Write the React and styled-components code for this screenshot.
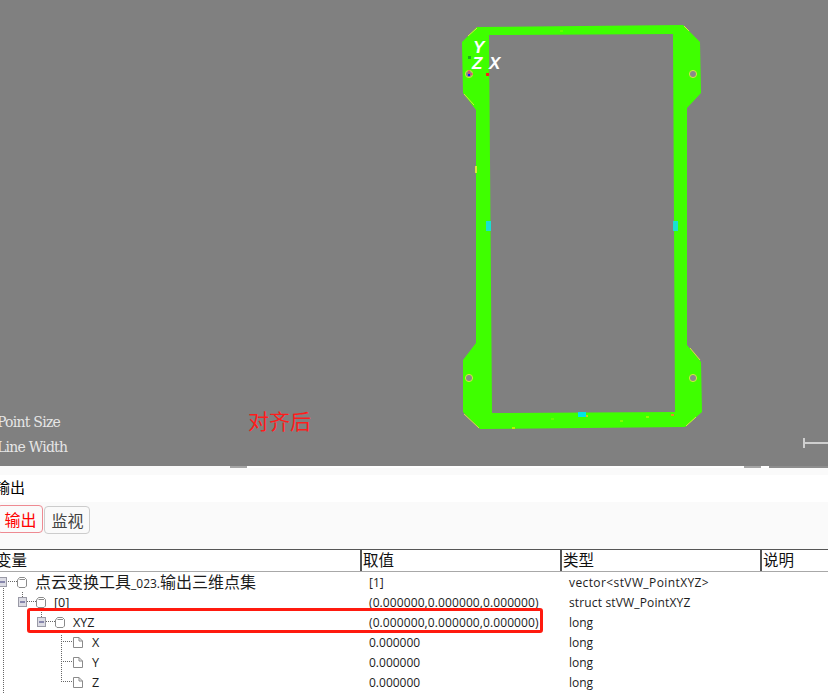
import React from "react"
import styled, { createGlobalStyle } from "styled-components"

const GlobalStyle = createGlobalStyle`
    html, body {
        margin: 0;
        padding: 0;
        background: #ffffff;
        overflow: hidden;
    }
`

const cjk = `"Noto Sans CJK SC", sans-serif`
const ui = `"Open Sans", "Noto Sans CJK SC", sans-serif`

const Page = styled.div`
    width: 828px;
    height: 694px;
    display: flex;
    flex-direction: column;
    overflow: hidden;
    position: relative;
    font-family: ${ui};
`

const Viewport = styled.section`
    position: relative;
    height: 466px;
    flex: none;
    background: #808080;
    overflow: hidden;
`

const Plate = styled.svg`
    position: absolute;
    inset: 0;
`

const AxisLabel = styled.span`
    position: absolute;
    left: ${props => props.x}px;
    top: ${props => props.y}px;
    color: #ffffff;
    font: italic bold 17px/16px "Liberation Sans", sans-serif;
`

const ControlLabel = styled.span`
    position: absolute;
    left: -3px;
    top: ${props => props.y}px;
    color: #e6e6e6;
    font: 14px/20px "DejaVu Serif", serif;
    letter-spacing: -0.75px;
`

const Caption = styled.span`
    position: absolute;
    left: 248px;
    top: 406px;
    color: #ff1c1c;
    font: 21px/28px ${cjk};
`

const ScaleBar = styled.div`
    position: absolute;
    left: 803px;
    top: 438px;
    width: 25px;
    height: 10px;
    box-sizing: border-box;
    border-left: 2px solid #cfcfcf;

    &::after {
        content: "";
        display: block;
        margin-top: 4px;
        height: 2px;
        background: #cfcfcf;
    }
`

const Slider = styled.div`
    height: 2px;
    flex: none;
    display: flex;
    background: #fafafa;
`

const SliderPart = styled.div`
    width: ${props => props.w}px;
    flex: ${props => props.w ? "none" : 1};
    background: ${props => props.color};
`

const GapStrip = styled.div`
    height: 7px;
    flex: none;
    background: #fafafa;
`

const PanelTitle = styled.div`
    height: 27px;
    flex: none;
    margin-left: -5px;
    background: #ffffff;
    color: #000000;
    font: 15px/24px ${cjk};
`

const TabBar = styled.div`
    height: 47px;
    flex: none;
    box-sizing: border-box;
    background: #fafafa;
    display: flex;
    align-items: flex-start;
    gap: 1px;
    padding-top: 3px;
    margin-left: -3px;
`

const Tab = styled.button`
    width: 46px;
    height: 28px;
    margin-top: ${props => props.active ? "0" : "1px"};
    padding: 0 0 0 1px;
    box-sizing: border-box;
    border-radius: 4px;
    border: 1px solid ${props => props.active ? "#ee8a92" : "#cccccc"};
    background: #fafafa;
    color: ${props => props.active ? "#ff0000" : "#444444"};
    font: 16px/24px ${cjk};
`

const Table = styled.div`
    flex: 1;
    background: #ffffff;
    border-top: 1px solid #555555;
`

const HeaderRow = styled.div`
    height: 21px;
    display: grid;
    grid-template-columns: 360px 200px 200px 68px;
    border-bottom: 1px solid #a8a8a8;
`

const HeaderCell = styled.div`
    box-sizing: border-box;
    padding-left: ${props => props.first ? "0" : "1px"};
    margin-left: ${props => props.first ? "-4px" : "0"};
    border-left: ${props => props.first ? "none" : "2px solid #555555"};
    color: #111111;
    font: 15.5px/18px ${cjk};
`

const Row = styled.div`
    height: 20px;
    display: grid;
    grid-template-columns: 360px 200px 268px;
    color: #1c1c1c;
    font-size: 12px;
    line-height: 22px;
`

const NameCell = styled.div`
    height: 20px;
    display: flex;
    align-items: center;
    margin-left: ${props => props.indent}px;
    white-space: nowrap;
`

const Connector = styled.span`
    flex: none;
    width: ${props => props.w}px;
`

const TreeName = styled.span`
    margin-left: ${props => props.leaf ? 9 : 8}px;
    padding-top: ${props => props.large ? 0 : 2}px;
    font-size: ${props => props.large ? "16px" : "12.6px"};
    font-family: ${props => props.large ? cjk : ui};

    small {
        font-size: 12px;
        font-family: ${ui};
    }
`

const ValueCell = styled.div`
    padding-left: 9px;
    white-space: nowrap;
    letter-spacing: ${props => props.spread || 0}px;
`

const TypeCell = styled.div`
    padding-left: 9px;
    white-space: nowrap;
    letter-spacing: ${props => props.spread || 0}px;
`

const TreeGuides = styled.svg`
    position: absolute;
    left: 0;
    top: 572px;
    pointer-events: none;
`

const Highlight = styled.div`
    position: absolute;
    left: 27px;
    top: 608px;
    width: 516px;
    height: 25px;
    box-sizing: border-box;
    border: 3px solid #ff1a0f;
    border-radius: 3px;
    pointer-events: none;
`

const ExpanderBox = styled.svg`
    flex: none;
`

const NodeGlyph = styled.svg`
    flex: none;
`

const outline = "M477 27L683 25L700 42L701 93L687 108L687 345L701 362L702 412L685 427L480 429L463 412L463 360L476 343L476 110L463 93L462 42Z"
const opening = "M489 35L673 34L675 412L492 413Z"

const holes = [[469, 74], [693, 74], [469, 378], [693, 378]]
const edgeMarks = [
    "M468 36L477 28", "M684 26L689 31", "M464 94L474 105",
    "M690 348L700 360", "M464 414L479 428", "M686 426L696 417",
]
const specks = [
    [512, 427, "#b9f000"], [671, 414, "#e88a2a"], [646, 416, "#8cff00"], [620, 420, "#7cff00"],
    [585, 415, "#d8c020"], [551, 418, "#62ff00"], [560, 30, "#62ff00"],
]

const Expander = () => (
    <ExpanderBox width="9" height="10" viewBox="0 0 9 10">
        <rect x="0.5" y="0.5" width="8" height="9" fill="#dcdce4" stroke="#9a9aa6" />
        <path d="M2 5H7" stroke="#333377" />
    </ExpanderBox>
)

// folder for branches, sheet with a folded corner for leaves
const NodeIcon = ({ leaf }) => (
    <NodeGlyph width="10" height="11" viewBox="0 0 10 11" fill="none" stroke="#8a8a8a">
        {leaf
            ? <path d="M0.5 0.5H6L9.5 4V10.5H0.5ZM6 0.5V4H9.5" />
            : <path d="M0.5 3L2.5 0.5H7.5L9.5 2.5V9L8 10.5H2L0.5 9ZM2.5 2.5H8" />}
    </NodeGlyph>
)

const rows = [
    { indent: -2, connector: 10, name: <>点云变换工具<small>_023.</small>输出三维点集</>, large: true, value: "[1]", type: "vector<stVW_PointXYZ>", typeSpread: 0.4 },
    { indent: 18, connector: 9, name: "[0]", value: "(0.000000,0.000000,0.000000)", valueSpread: 0.1, type: "struct stVW_PointXYZ", typeSpread: 0.15 },
    { indent: 37, connector: 9, name: "XYZ", value: "(0.000000,0.000000,0.000000)", valueSpread: 0.1, type: "long" },
    { indent: 73, name: "X", leaf: true, value: "0.000000", type: "long" },
    { indent: 73, name: "Y", leaf: true, value: "0.000000", type: "long" },
    { indent: 73, name: "Z", leaf: true, value: "0.000000", type: "long" },
]

export default function App() {
    return (
        <Page>
            <GlobalStyle />
            <Viewport>
                <Plate width="828" height="466" viewBox="0 0 828 466">
                    <path d={outline + opening} fill="#3fff00" fillRule="evenodd" />
                    {edgeMarks.map(d => <path key={d} d={d} stroke="#d6e83c" strokeWidth="1" />)}
                    {specks.map(([x, y, color]) => <rect key={x} x={x} y={y} width="3" height="2" fill={color} />)}
                    {holes.map(([cx, cy]) => (
                        <circle key={cx + "-" + cy} cx={cx} cy={cy} r="3.6" fill="#8a8a8a" stroke="#cfee3c" strokeWidth="1" />
                    ))}
                    <path d="M469 74H473M469 74V70" stroke="#ff2a6a" />
                    <rect x="468" y="74" width="2" height="2" fill="#1a1aff" />
                    <rect x="486" y="73" width="3" height="3" fill="#ff1a1a" />
                    <rect x="468" y="56" width="3" height="3" fill="#1fae1f" />
                    <rect x="486" y="221" width="5" height="10" fill="#19e0d0" />
                    <rect x="673" y="221" width="5" height="10" fill="#19e0d0" />
                    <rect x="578" y="412" width="8" height="5" fill="#00e5e5" />
                    <rect x="475" y="166" width="2" height="7" fill="#d6e83c" />
                </Plate>
                <AxisLabel x={473} y={40}>Y</AxisLabel>
                <AxisLabel x={472} y={56}>Z</AxisLabel>
                <AxisLabel x={489} y={56}>X</AxisLabel>
                <ControlLabel y={412}>Point Size</ControlLabel>
                <ControlLabel y={437}>Line Width</ControlLabel>
                <Caption>对齐后</Caption>
                <ScaleBar />
            </Viewport>
            <Slider>
                <SliderPart w={230} color="#fafafa" />
                <SliderPart w={17} color="#a6a6a6" />
                <SliderPart w={497} color="#ffffff" />
                <SliderPart w={17} color="#a6a6a6" />
                <SliderPart w={8} color="#ffffff" />
                <SliderPart color="#8e8e8e" />
            </Slider>
            <GapStrip />
            <PanelTitle>输出</PanelTitle>
            <TabBar>
                <Tab active>输出</Tab>
                <Tab>监视</Tab>
            </TabBar>
            <Table>
                <HeaderRow>
                    <HeaderCell first>变量</HeaderCell>
                    <HeaderCell>取值</HeaderCell>
                    <HeaderCell>类型</HeaderCell>
                    <HeaderCell>说明</HeaderCell>
                </HeaderRow>
                {rows.map((row, i) => (
                    <Row key={i}>
                        <NameCell indent={row.indent}>
                            {!row.leaf && <Expander />}
                            {!row.leaf && <Connector w={row.connector} />}
                            <NodeIcon leaf={row.leaf} />
                            <TreeName leaf={row.leaf} large={row.large}>{row.name}</TreeName>
                        </NameCell>
                        <ValueCell spread={row.valueSpread}>{row.value}</ValueCell>
                        <TypeCell spread={row.typeSpread}>{row.type}</TypeCell>
                    </Row>
                ))}
            </Table>
            <TreeGuides width="100" height="122" viewBox="0 0 100 122" fill="none" stroke="#666666" strokeDasharray="1 1">
                <path d="M3.5 16V122" />
                <path d="M8 9.5H17" />
                <path d="M22.5 20V25M27 29.5H36" />
                <path d="M41.5 38V45M46 49.5H55" />
                <path d="M61.5 63V110M61 69.5H72M61 89.5H72M61 109.5H72" />
            </TreeGuides>
            <Highlight />
        </Page>
    )
}
